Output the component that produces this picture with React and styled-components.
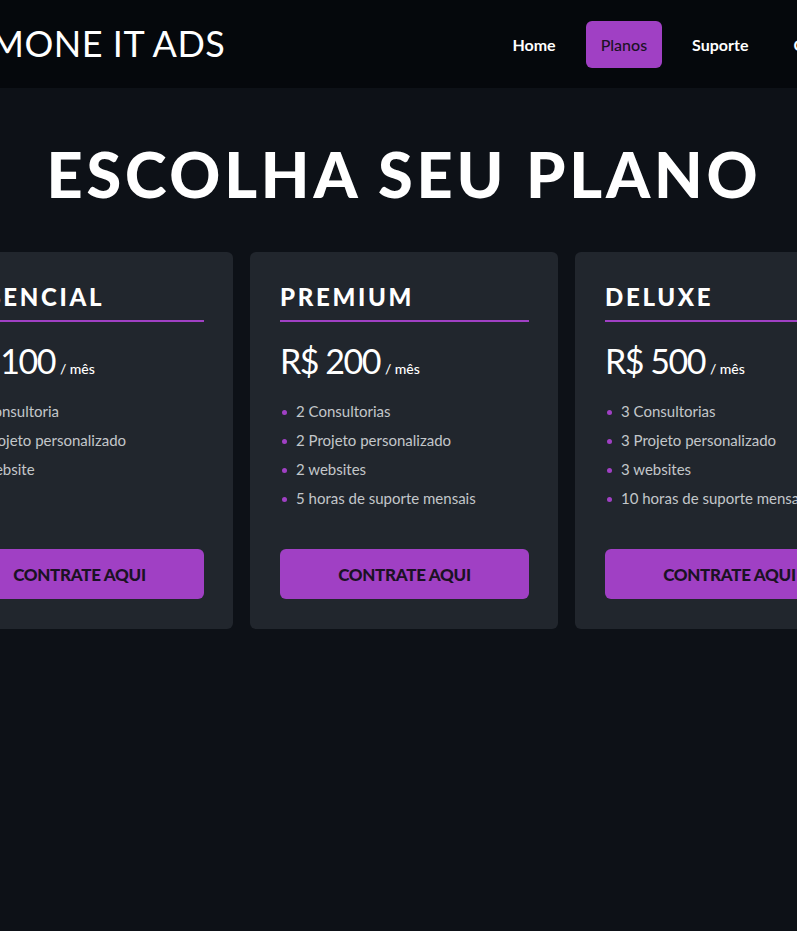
import React from "react";
import styled, { createGlobalStyle } from "styled-components";

const colors = {
  header: "#05080c",
  page: "#0d1117",
  card: "#21262d",
  primary: "#a040c4",
  text: "#ffffff",
  muted: "#c3c6ca",
  dark: "#1b1224",
};

const plans = [
  {
    name: "ESSENCIAL",
    price: "R$ 100",
    items: ["1 Consultoria", "1 Projeto personalizado", "1 website"],
  },
  {
    name: "PREMIUM",
    price: "R$ 200",
    items: [
      "2 Consultorias",
      "2 Projeto personalizado",
      "2 websites",
      "5 horas de suporte mensais",
    ],
  },
  {
    name: "DELUXE",
    price: "R$ 500",
    items: [
      "3 Consultorias",
      "3 Projeto personalizado",
      "3 websites",
      "10 horas de suporte mensais",
    ],
  },
];

const links = ["Home", "Planos", "Suporte", "Contato"];

export default function App() {
  return (
    <>
      <GlobalStyle />
      <Page>
        <Header>
          <HeaderInner>
            <Logo>SIMONE IT ADS</Logo>
            <Nav>
              {links.map(link => (
                <NavLink key={link} active={link === "Planos"}>
                  {link}
                </NavLink>
              ))}
            </Nav>
          </HeaderInner>
        </Header>

        <Main>
          <Title>ESCOLHA SEU PLANO</Title>
          <CardRow>
            {plans.map(plan => (
              <Card key={plan.name}>
                <PlanName>{plan.name}</PlanName>
                <Price>
                  {plan.price}
                  <span>/ mês</span>
                </Price>
                <Features>
                  {plan.items.map(item => (
                    <li key={item}>{item}</li>
                  ))}
                </Features>
                <Button>CONTRATE AQUI</Button>
              </Card>
            ))}
          </CardRow>
        </Main>
      </Page>
    </>
  );
}

const GlobalStyle = createGlobalStyle`
  html, body {
    margin: 0;
    padding: 0;
    background: ${colors.page};
    overflow: hidden;
  }
  body {
    font-family: Lato, "Open Sans", sans-serif;
    color: ${colors.text};
  }
  * {
    box-sizing: border-box;
  }
`;

const Page = styled.div`
  width: 808px;
  min-height: 931px;
  background: ${colors.page};
`;

const Header = styled.header`
  height: 88px;
  background: ${colors.header};
  display: flex;
  align-items: center;
`;

const HeaderInner = styled.div`
  flex: 0 0 906px;
  margin-left: -40px;
  display: flex;
  align-items: center;
  justify-content: space-between;
`;

const Logo = styled.div`
  font-size: 36px;
  font-weight: 400;
  letter-spacing: 0.5px;
  white-space: nowrap;
  margin-top: -2px;
`;

const Nav = styled.nav`
  display: flex;
  align-items: center;
  gap: 15px;
`;

const NavLink = styled.a`
  display: block;
  padding: 14px 15px;
  border-radius: 6px;
  font-size: 16px;
  font-weight: ${props => (props.active ? "500" : "700")};
  color: ${props => (props.active ? colors.dark : colors.text)};
  background: ${props => (props.active ? colors.primary : "transparent")};
  cursor: pointer;
`;

const Main = styled.main`
  display: flex;
  flex-direction: column;
  align-items: center;
`;

const Title = styled.h1`
  margin: 50px 0 0;
  font-size: 63px;
  font-weight: 900;
  line-height: 72px;
  letter-spacing: 3.8px;
  white-space: nowrap;
`;

const CardRow = styled.div`
  margin-top: 42px;
  display: flex;
  justify-content: center;
  gap: 17px;
  width: 100%;
`;

const Card = styled.div`
  flex: 0 0 308px;
  height: 377px;
  background: ${colors.card};
  border-radius: 6px;
  padding: 30px 29px 30px 30px;
  display: flex;
  flex-direction: column;
`;

const PlanName = styled.h2`
  margin: 0;
  padding-bottom: 9px;
  border-bottom: 2px solid ${colors.primary};
  font-size: 24px;
  line-height: 29px;
  font-weight: 900;
  letter-spacing: 2.7px;
  white-space: nowrap;
`;

const Price = styled.div`
  margin-top: 18px;
  font-size: 34px;
  line-height: 42px;
  font-weight: 400;
  letter-spacing: -1.5px;
  white-space: nowrap;

  span {
    margin-left: 5px;
    font-size: 14px;
    font-weight: 500;
    letter-spacing: 0;
  }
`;

const Features = styled.ul`
  margin: 7px 0 0;
  padding: 0;
  list-style: none;

  li {
    position: relative;
    padding-left: 16px;
    font-size: 15px;
    line-height: 29px;
    color: ${colors.muted};
    white-space: nowrap;
  }

  li::before {
    content: "";
    position: absolute;
    left: 2px;
    top: 13px;
    width: 5px;
    height: 5px;
    border-radius: 50%;
    background: ${colors.primary};
  }
`;

const Button = styled.button`
  margin-top: auto;
  height: 50px;
  width: 100%;
  border: none;
  border-radius: 6px;
  background: ${colors.primary};
  color: ${colors.dark};
  font-family: Lato, "Open Sans", sans-serif;
  font-size: 17px;
  font-weight: 900;
  letter-spacing: -0.3px;
  cursor: pointer;
`;
